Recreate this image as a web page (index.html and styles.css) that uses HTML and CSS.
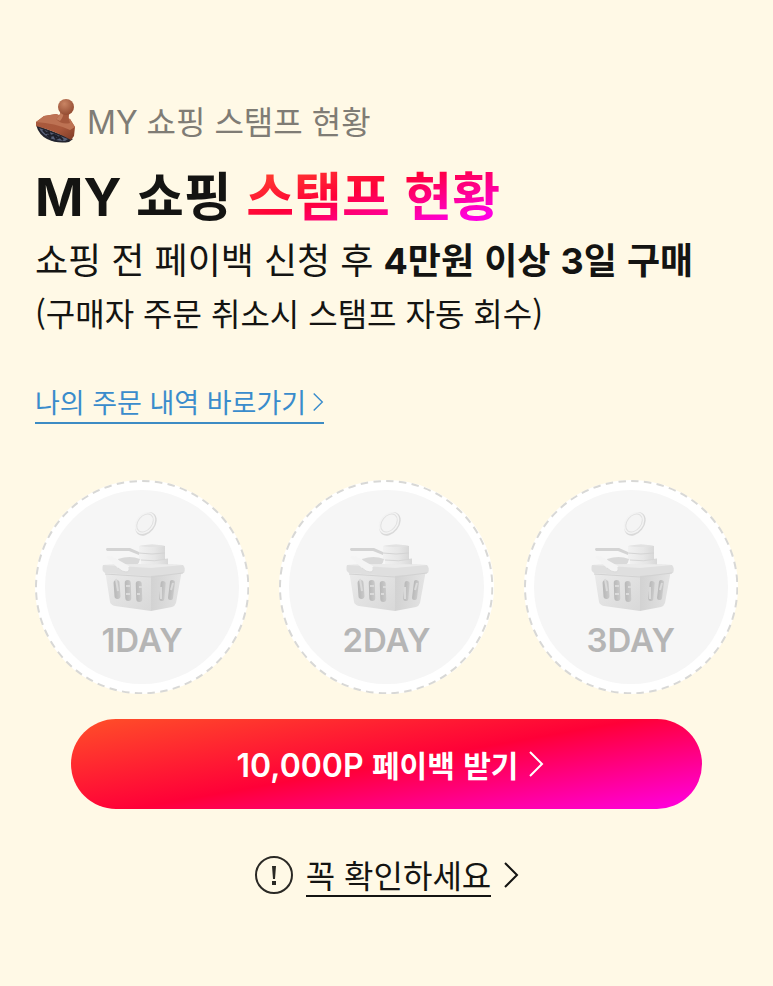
FILE: index.html
```html
<!DOCTYPE html>
<html lang="ko">
	<head>
		<meta charset="utf-8">
		<meta name="viewport" content="width=device-width, initial-scale=1">
		<title>MY 쇼핑 스탬프 현황</title>
		<link rel="stylesheet" href="styles.css">
	</head>
	<body>
		<!-- 공통 아이콘 -->
		<svg class="defs" width="0" height="0" aria-hidden="true">
			<defs>
				<linearGradient id="face" x1="0" y1="0" x2="1" y2="1">
					<stop offset="0" stop-color="#ebebeb"/>
					<stop offset="1" stop-color="#d8d8d8"/>
				</linearGradient>
				<linearGradient id="side" x1="0" y1="0" x2="1" y2="0">
					<stop offset="0" stop-color="#d2d2d2"/>
					<stop offset="1" stop-color="#e4e4e4"/>
				</linearGradient>
				<linearGradient id="can" x1="0" y1="0" x2="1" y2="0">
					<stop offset="0" stop-color="#f1f1f1"/>
					<stop offset=".6" stop-color="#e6e6e6"/>
					<stop offset="1" stop-color="#d8d8d8"/>
				</linearGradient>
				<linearGradient id="slot" x1="0" y1="0" x2="1" y2="0">
					<stop offset="0" stop-color="#b8b8b8"/>
					<stop offset="1" stop-color="#cacaca"/>
				</linearGradient>
			</defs>
			<symbol id="basket" viewBox="0 0 92 112">
				<ellipse cx="50" cy="20" rx="9" ry="13" transform="rotate(38 50 20)" fill="#d9d9d9"/>
				<ellipse cx="49" cy="19" rx="9" ry="12" transform="rotate(38 49 19)" fill="#f3f3f3"/>
				<ellipse cx="49" cy="19" rx="7" ry="10" transform="rotate(38 49 19)" fill="#f4f4f4" stroke="#e0e0e0"/>
				<path d="M11 44h23l9 4v3l-10-4H11q-2-2 0-3z" fill="#d4d4d4"/>
				<path d="M43 42q13-3 26 0v14q-13 3-26 0z" fill="url(#can)"/>
				<path d="M43 42q13-3 26 0-13 2-26 0z" fill="#e2e2e2"/>
				<path d="M43 49q13 2 26 0" fill="none" stroke="#d4d4d4"/>
				<path d="M45 56q13 2 27-1v10H45z" fill="url(#can)"/>
				<path d="M45 56q13 2 27-1" fill="none" stroke="#d6d6d6"/>
				<path d="M22 55q12-4 22 0-1 8-12 8-8 0-10-8z" fill="#d9d9d9"/>
				<path d="M9 66l46 3v38l-36-5q-4-1-5-4z" fill="url(#face)"/>
				<path d="M55 69l31-3-6 33q-1 3-4 4l-21 4z" fill="url(#side)"/>
				<path d="M7 61q40-2 80 0 3 3 1 8l-33 3-46-3q-4-3-2-8z" fill="#dfdfdf"/>
				<path d="M7 61q40-2 80 0l-32 3z" fill="#ebebeb"/>
				<path d="M9 70l46 3 32-4" fill="none" stroke="#d2d2d2"/>
				<path d="M10 53q3-2 7 0l16 9q2 5-3 6-4 0-8-4z" fill="#f4f4f4"/>
				<path d="M22 64q4 4 8 4 4 0 3-5" fill="none" stroke="#dadada"/>
				<g fill="url(#slot)">
					<rect x="18" y="76" width="6" height="19" rx="3" transform="rotate(-4 21 85)"/>
					<rect x="29" y="76" width="6" height="21" rx="3" transform="rotate(-2 32 86)"/>
					<rect x="40" y="77" width="6" height="21" rx="3" transform="rotate(-2 43 87)"/>
					<rect x="64" y="77" width="5" height="20" rx="2" transform="rotate(5 66 87)"/>
					<rect x="73" y="76" width="5" height="20" rx="2" transform="rotate(7 75 86)"/>
				</g>
				<path d="M20 75l2 12M30 82h4M30 90h4M43 83h3M41 90h3M65 83v12M75 86l2-7" stroke="#dadada" stroke-width="2" fill="none"/>
			</symbol>
			<symbol id="ring" viewBox="0 0 214 214">
				<circle cx="107" cy="107" r="106" pathLength="624" fill="none" stroke="#d8d8d6" stroke-width="2" stroke-dasharray="7 5"/>
			</symbol>
			<symbol id="arrow" viewBox="0 0 16 28">
				<path d="M2 2l12 12L2 26" fill="none" stroke="currentColor" stroke-width="2"/>
			</symbol>
		</svg>

		<main class="stamp">
			<p class="label">
				<svg class="label-icon" viewBox="0 -1 42 46" aria-hidden="true">
					<defs>
						<linearGradient id="wood" x1="0" y1="0" x2="1" y2="1">
							<stop offset="0" stop-color="#a85a3e"/>
							<stop offset=".6" stop-color="#a9583b"/>
							<stop offset="1" stop-color="#7d3a26"/>
						</linearGradient>
						<radialGradient id="knob" cx=".4" cy=".3" r=".8">
							<stop offset="0" stop-color="#c98463"/>
							<stop offset="1" stop-color="#8d452c"/>
						</radialGradient>
					</defs>
					<path d="M1 27l37 14-4 3q-12 2-22-3Q4 37 1 27z" fill="#22242e"/>
					<path d="M4 30l29 11-3 2q-10 0-17-4-6-3-9-9z" fill="#59627a"/>
					<path d="M8 32l3 3 3-1 1 4 4-1 2 4 4-2 3 3M12 37l4 3M20 37l3 2" fill="none" stroke="#1d1f29" stroke-width="2"/>
					<path d="M1 24l8-6 12-2 14 5 5 8-1 9-3 4Q20 33 1 28z" fill="url(#wood)"/>
					<path d="M1 24l8-6 12-2 14 5 5 8-5 3Q20 25 1 24z" fill="#bd7253"/>
					<path d="M26 13l8 3q-1 5 1 9-8 2-14-4 4-3 5-8z" fill="#a5583c"/>
					<path d="M26 13l3 1q-1 6-4 9l-4-2q4-3 5-8z" fill="#c37c5c"/>
					<circle cx="31" cy="9" r="8" fill="url(#knob)"/>
				</svg>
				<span><span class="latin">MY</span> 쇼핑 스탬프 현황</span>
			</p>
			<h1 class="title"><span class="latin">MY</span> 쇼핑 <span class="title-point">스탬프 현황</span></h1>
			<p class="desc">쇼핑 전 페이백 신청 후 <strong><span class="latin">4</span>만원 이상 <span class="latin">3</span>일 구매</strong></p>
			<p class="note">(구매자 주문 취소시 스탬프 자동 회수)</p>
			<a class="order-link" href="#order">나의 주문 내역 바로가기
				<svg class="arrow-small" aria-hidden="true"><use href="#arrow"/></svg>
			</a>

			<ul class="days">
				<li class="day">
					<svg class="day-ring" aria-hidden="true"><use href="#ring"/></svg>
					<div class="day-inner">
						<svg class="day-icon" aria-hidden="true"><use href="#basket"/></svg>
						<span class="day-name">1DAY</span>
					</div>
				</li>
				<li class="day">
					<svg class="day-ring" aria-hidden="true"><use href="#ring"/></svg>
					<div class="day-inner">
						<svg class="day-icon" aria-hidden="true"><use href="#basket"/></svg>
						<span class="day-name">2DAY</span>
					</div>
				</li>
				<li class="day">
					<svg class="day-ring" aria-hidden="true"><use href="#ring"/></svg>
					<div class="day-inner">
						<svg class="day-icon" aria-hidden="true"><use href="#basket"/></svg>
						<span class="day-name">3DAY</span>
					</div>
				</li>
			</ul>

			<button class="payback" type="button">
				<span><span class="latin point">10,000P</span> 페이백 받기</span>
				<svg class="arrow" aria-hidden="true"><use href="#arrow"/></svg>
			</button>

			<a class="notice" href="#notice">
				<svg class="notice-icon" viewBox="0 0 40 40" aria-hidden="true">
					<circle cx="20" cy="20" r="18" fill="none" stroke="#2a2925" stroke-width="2"/>
					<path d="M18 11h4l-1 13h-2zM18 26h4v4h-4z" fill="#2a2925"/>
				</svg>
				<span class="notice-text">꼭 확인하세요</span>
				<svg class="arrow" aria-hidden="true"><use href="#arrow"/></svg>
			</a>
		</main>
	</body>
</html>
```
FILE: styles.css
```css
* {
	box-sizing: border-box;
}

body {
	margin: 0;
	background: #fff9e6;
	color: #141412;
	font-family: "Noto Sans CJK KR", sans-serif;
}

.defs {
	position: absolute;
}

.latin {
	font-family: Inter, sans-serif;
	line-height: 1;
}

.stamp {
	display: flex;
	flex-direction: column;
	padding: 94px 35px 88px;
}

.label,
.title,
.desc,
.note {
	margin: 0;
}

.label {
	display: flex;
	align-items: center;
	gap: 10px;
	color: #7f7c75;
	font-size: 32px;
	line-height: 52px;
}

.label-icon {
	width: 42px;
	height: 46px;
}

.title {
	margin-top: 12px;
	font-size: 52px;
	font-weight: 700;
	line-height: 72px;
}

.title-point {
	background: linear-gradient(165deg, #ff4a2c 10%, #ff0038 45%, #ff00e0 85%);
	-webkit-background-clip: text;
	background-clip: text;
	color: transparent;
}

.desc {
	font-size: 36px;
	line-height: 56px;
}

.note {
	font-size: 32px;
	line-height: 52px;
}

.order-link {
	display: flex;
	align-items: center;
	align-self: flex-start;
	gap: 6px;
	margin-top: 44px;
	border-bottom: 2px solid #3d8cc4;
	color: #3a8ccc;
	font-size: 27px;
	line-height: 40px;
	text-decoration: none;
}

.arrow-small {
	width: 12px;
	height: 20px;
}

.arrow {
	width: 16px;
	height: 28px;
}

.days {
	display: grid;
	grid-template-columns: repeat(3, 1fr);
	gap: 30px;
	margin: 56px 0 0;
	padding: 0;
	list-style: none;
}

.day {
	position: relative;
	aspect-ratio: 1;
	padding: 10px;
	border-radius: 50%;
	background: #fff;
}

.day-ring {
	position: absolute;
	inset: 0;
	width: 100%;
	height: 100%;
}

.day-inner {
	display: flex;
	flex-direction: column;
	align-items: center;
	height: 100%;
	padding-top: 14px;
	border-radius: 50%;
	background: #f6f6f6;
}

.day-icon {
	width: 92px;
	height: 112px;
}

.day-name {
	margin-top: 4px;
	color: #b5b5b5;
	font-family: Inter, sans-serif;
	font-size: 33px;
	font-weight: 600;
	line-height: 40px;
}

.payback {
	display: flex;
	align-items: center;
	justify-content: center;
	gap: 10px;
	height: 90px;
	margin: 25px 36px 0;
	padding: 0 0 0 8px;
	border: 0;
	border-radius: 45px;
	background: linear-gradient(170deg, #ff5028 0%, #ff0038 50%, #ff00e6 100%);
	color: #fff;
	font-family: "Noto Sans CJK KR", sans-serif;
	font-size: 30px;
	font-weight: 600;
	line-height: 44px;
}

.point {
	font-family: Inter, sans-serif;
	font-size: 32px;
}

.notice {
	display: flex;
	align-items: center;
	justify-content: center;
	gap: 12px;
	margin-top: 44px;
	color: #141412;
	font-size: 32px;
	line-height: 42px;
	text-decoration: none;
}

.notice-icon {
	width: 40px;
	height: 40px;
}

.notice-text {
	border-bottom: 2px solid #141412;
}
```
